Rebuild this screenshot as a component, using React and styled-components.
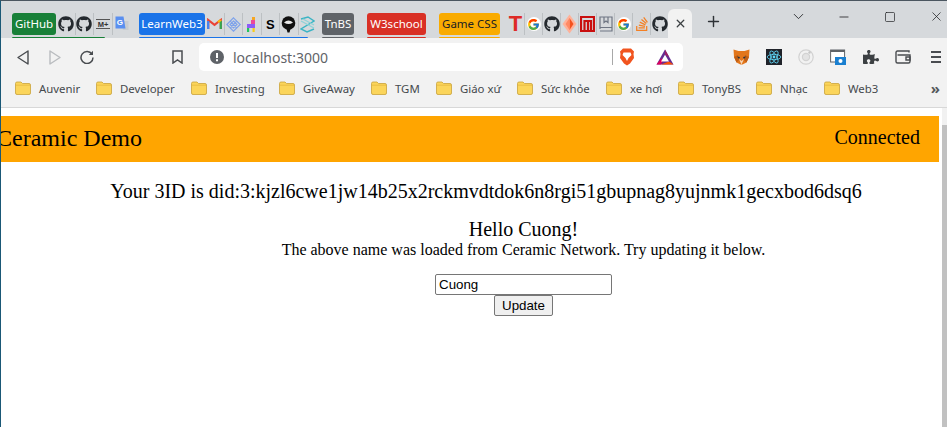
import React from 'react';
import styled, { createGlobalStyle } from 'styled-components';
import { FaGithub, FaStackOverflow, FaPuzzlePiece } from 'react-icons/fa';
import { FcGoogle } from 'react-icons/fc';
import { ChevronDown, Minus, Square, X, Plus } from 'lucide-react';

const GlobalStyle = createGlobalStyle`
  html, body { margin: 0; padding: 0; height: 100%; overflow: hidden; background: #fff; }
  #root { height: 427px; }
`;

const chromeFont = `'Noto Sans', 'Open Sans', Arial, sans-serif`;

const Window = styled.div`
  height: 427px;
  display: flex;
  flex-direction: column;
  border-left: 1px solid #1a5876;
  border-top: 1px solid #4b5660;
  box-sizing: border-box;
  font-family: ${chromeFont};
  overflow: hidden;
`;

const TabStrip = styled.div`
  height: 37px;
  flex: none;
  background: #d6d9dc;
  display: flex;
  align-items: flex-start;
  padding: 12px 0 0 11px;
  box-sizing: border-box;
`;

const Group = styled.div`
  display: flex;
  flex-direction: column;
  margin-left: ${(p) => p.$before || 0}px;
  margin-right: ${(p) => p.$gap || 0}px;
`;

const GroupRow = styled.div`
  display: flex;
  align-items: flex-start;
`;

const GroupLine = styled.div`
  height: 2px;
  margin-top: 2px;
  margin-right: ${(p) => p.$trim || 0}px;
  background: ${(p) => p.$color};
  border-radius: 1px 1px 0 0;
`;

const Pill = styled.div`
  height: 22px;
  line-height: 22px;
  margin-right: ${(p) => p.$after || 0}px;
  border-radius: 3px;
  background: ${(p) => p.$bg};
  color: ${(p) => p.$color || '#fff'};
  font-size: 11.5px;
  white-space: nowrap;
  flex: none;
  width: ${(p) => p.$w}px;
  box-sizing: border-box;
  text-align: center;
`;

const Pinned = styled.div`
  width: ${(p) => p.$w || 18.5}px;
  height: 22px;
  flex: none;
  display: flex;
  align-items: center;
  justify-content: center;
  box-sizing: border-box;
  border-right: ${(p) => (p.$last ? 'none' : '1px solid #bcc0c3')};
  color: #24292e;
`;

const ActiveTab = styled.div`
  width: 24px;
  height: 29px;
  margin-top: -4px;
  margin-left: -1px;
  flex: none;
  background: #f2f2f2;
  border-radius: 6px 6px 0 0;
  display: flex;
  align-items: center;
  justify-content: center;
  color: #3c4043;
`;

const NewTab = styled.div`
  flex: none;
  margin-left: 13px;
  display: flex;
  color: #2e3236;
`;

const WindowControls = styled.div`
  margin-left: auto;
  margin-right: -12px;
  margin-top: -5px;
  display: flex;
  align-items: center;
  color: #202124;
`;

const ControlButton = styled.div`
  width: 46px;
  display: flex;
  justify-content: center;
`;

const Toolbar = styled.div`
  height: 33px;
  flex: none;
  background: #f2f2f2;
  display: flex;
  align-items: flex-start;
  padding-top: 5px;
  box-sizing: border-box;
`;

const NavButton = styled.div`
  width: ${(p) => p.$w}px;
  margin-left: ${(p) => p.$before || 0}px;
  height: 28px;
  flex: none;
  display: flex;
  align-items: center;
  justify-content: center;
  color: #494c50;
`;

const Omnibox = styled.div`
  width: 484px;
  height: 28px;
  flex: none;
  margin-left: 10px;
  background: #fff;
  border-radius: 5px;
  display: flex;
  align-items: center;
  box-sizing: border-box;
  padding: 0 2px 0 11px;
`;

const Url = styled.span`
  font-size: 14px;
  color: #5f6368;
  margin-left: 9px;
  flex: 1;
`;

const OmniDivider = styled.div`
  width: 1px;
  height: 16px;
  background: #a8a8a8;
`;

const ExtIcons = styled.div`
  display: flex;
  align-items: center;
  margin-left: 42px;
`;

const ExtSlot = styled.div`
  width: ${(p) => p.$w || 32.4}px;
  margin-left: ${(p) => p.$before || 0}px;
  height: 28px;
  display: flex;
  align-items: center;
  justify-content: center;
  flex: none;
  color: #3c4043;
`;

const BookmarkBar = styled.div`
  height: 34px;
  padding: 0 0 2px 14px;
  flex: none;
  background: #f2f2f2;
  border-bottom: 1px solid #d8d8d8;
  display: flex;
  align-items: center;
`;

const Bookmark = styled.div`
  width: ${(p) => p.$w}px;
  flex: none;
  display: flex;
  align-items: center;
  gap: 8px;
  font-size: 11.4px;
  color: #45494d;
  white-space: nowrap;
`;

const MoreBookmarks = styled.div`
  margin-left: auto;
  padding-right: 7px;
  font-size: 15px;
  font-weight: 700;
  color: #55595c;
`;

const Page = styled.div`
  flex: 1;
  display: flex;
  min-height: 0;
  background: #fff;
  font-family: 'Liberation Serif', 'Times New Roman', serif;
  color: #000;
`;

const Main = styled.main`
  flex: 1;
  min-width: 0;
  padding-top: 8px;
`;

const Header = styled.header`
  height: 46px;
  margin-right: 3px;
  background: orange;
  display: flex;
  align-items: center;
  justify-content: space-between;
  overflow: hidden;
`;

const Title = styled.div`
  font-size: 24px;
  margin-left: -5px;
  margin-top: -1px;
`;

const Status = styled.div`
  font-size: 20px;
  margin-right: 19px;
  margin-top: -4px;
`;

const DidLine = styled.div`
  font-size: 20px;
  line-height: 23px;
  text-align: center;
  margin: 18px 0 0 29px;
  white-space: nowrap;
`;

const Form = styled.section`
  margin-top: 15px;
  padding-left: 104px;
  display: flex;
  flex-direction: column;
  align-items: center;
`;

const Hello = styled.div`
  font-size: 20px;
  line-height: 23px;
`;

const Note = styled.div`
  font-size: 16px;
  line-height: 18px;
  margin-bottom: 15px;
`;

const NameInput = styled.input`
  width: 177px;
  height: 21px;
  box-sizing: border-box;
  font-family: 'Liberation Sans', Arial, sans-serif;
  font-size: 13.33px;
  padding: 1px 3px;
  border: 1px solid #767676;
  border-radius: 2px;
  color: #000;
  margin: 0;
`;

const UpdateButton = styled.button`
  width: 59px;
  height: 21px;
  box-sizing: border-box;
  font-family: 'Liberation Sans', Arial, sans-serif;
  font-size: 13.33px;
  padding: 0;
  border: 1px solid #767676;
  border-radius: 2px;
  background: #efefef;
  color: #000;
  margin: 0;
`;

const Scrollbar = styled.div`
  width: 5px;
  flex: none;
  background: #f1f1f1;
  display: flex;
`;

const ScrollThumb = styled.div`
  flex: 1;
  margin-top: 17px;
  background: #c1c1c1;
`;

const Favicon = styled.span`
  font-family: 'Liberation Sans', Arial, sans-serif;
  font-size: ${(p) => p.$size}px;
  font-weight: 700;
  color: ${(p) => p.$color || '#000'};
  line-height: 1;
`;

const GoogleBadge = styled.span`
  display: flex;
  width: 14px;
  height: 14px;
  align-items: center;
  justify-content: center;
  background: #fff;
  border-radius: 50%;
`;

const Folder = () => (
  <svg width="16" height="14" viewBox="0 0 16 14">
    <path d="M0.5 2.5Q0.5 1 2 1H6L7.5 2.5H14Q15.5 2.5 15.5 4V12Q15.5 13.5 14 13.5H2Q0.5 13.5 0.5 12Z" fill="#fbd55b" stroke="#c9a23a" strokeWidth="0.8" />
    <path d="M1 4.2H15" stroke="#e6b93f" strokeWidth="0.8" />
  </svg>
);

const GmailIcon = () => (
  <svg width="15" height="12" viewBox="0 0 15 12" fill="none">
    <path d="M1.2 11V2L7.5 6.8 13.8 2V11" strokeWidth="2.2" stroke="#ea4335" />
    <path d="M1.2 11V3" strokeWidth="2.2" stroke="#4285f4" />
    <path d="M13.8 11V3" strokeWidth="2.2" stroke="#34a853" />
    <path d="M11 4.2 13.8 2" strokeWidth="2.2" stroke="#fbbc04" />
  </svg>
);

const MarkdownIcon = () => (
  <svg width="14" height="12" viewBox="0 0 14 12">
    <path d="M0 1.5H14M0 10.5H14" stroke="#555" strokeWidth="1" />
    <text x="7" y="8.6" fontSize="7.5" fontWeight="700" textAnchor="middle" fontFamily="Liberation Sans" fill="#333">M+</text>
  </svg>
);

const TranslateIcon = () => (
  <svg width="14" height="16" viewBox="0 0 14 16">
    <path d="M6 5H13.5V14H8Z" fill="#c9ccd0" />
    <path d="M0.5 0.5H8.5L10.5 12.5H0.5Z" fill="#5a8ff0" />
    <text x="4.8" y="9" fontSize="8" fontWeight="700" textAnchor="middle" fontFamily="Liberation Sans" fill="#fff">G</text>
  </svg>
);

const DiamondNetIcon = () => (
  <svg width="15" height="15" viewBox="0 0 15 15" fill="none" stroke="#7ea2ea" strokeWidth="1.2">
    <path d="M7.5 0.8 14.2 7.5 7.5 14.2 0.8 7.5Z" />
    <path d="M4.2 4.2 10.8 10.8M10.8 4.2 4.2 10.8M7.5 4 11 7.5 7.5 11 4 7.5Z" />
  </svg>
);

const LlamaIcon = () => (
  <svg width="11" height="15" viewBox="0 0 11 15">
    <path d="M6 0H9V3H6Z" fill="#f6a623" />
    <path d="M5 3H9V7H5Z" fill="#ec4899" />
    <path d="M1 7H9V11H1Z" fill="#8b5cf6" />
    <path d="M1 11H3.2V15H1Z" fill="#22c55e" />
    <path d="M6.5 11H8.7V15H6.5Z" fill="#facc15" />
  </svg>
);

const HelmetIcon = () => (
  <svg width="15" height="17" viewBox="0 0 15 17">
    <circle cx="7.5" cy="7" r="6.8" fill="#111" />
    <path d="M3 6.5Q7.5 2.5 12 6.5Q7.5 9.5 3 6.5Z" fill="#e8e8e8" />
    <path d="M5.5 13H9.5L8.5 16.5H6.5Z" fill="#111" />
  </svg>
);

const CrossChainIcon = () => (
  <svg width="15" height="17" viewBox="0 0 15 17" fill="none" strokeWidth="1.4">
    <path d="M1 3 8 1 14 5 1 13 7 16 14 13" stroke="#3cb4c4" />
    <path d="M1 5 14 12M3 3 14 9" stroke="#8fd3d8" />
  </svg>
);

const ForwardDiamond = () => (
  <svg width="15" height="20" viewBox="0 0 15 20">
    <path d="M7.5 0.5 14.5 10 7.5 19.5 0.5 10Z" fill="#ffb199" />
    <path d="M7.5 4 11.5 10 7.5 16Z" fill="#f4511e" />
    <path d="M7.5 4 3.5 10 7.5 16Z" fill="#ff8a65" />
  </svg>
);

const RedBoxIcon = () => (
  <svg width="15" height="16" viewBox="0 0 15 16" fill="none" stroke="#c90f0f" strokeWidth="2.2">
    <path d="M1 1H14V15H1Z" />
    <path d="M4.5 15V5H11V15M8 6V15" />
  </svg>
);

const BookIcon = () => (
  <svg width="14" height="16" viewBox="0 0 14 16" fill="none" stroke="#6f7683" strokeWidth="1.2">
    <path d="M1 13V1H13V13M1 11.5H13M1 15H13V12.5" />
    <path d="M5 1V6.5L7 5 9 6.5V1" />
  </svg>
);

const BackIcon = () => (
  <svg width="12" height="15" viewBox="0 0 12 15" fill="none" stroke="#494c50" strokeWidth="1.4" strokeLinejoin="round">
    <path d="M1 7.5 11 1V14Z" />
  </svg>
);

const ForwardIcon = () => (
  <svg width="12" height="15" viewBox="0 0 12 15" fill="none" stroke="#b9bcbf" strokeWidth="1.4" strokeLinejoin="round">
    <path d="M11 7.5 1 1V14Z" />
  </svg>
);

const ReloadIcon = () => (
  <svg width="14" height="14" viewBox="0 0 14 14" fill="none" stroke="#494c50" strokeWidth="1.5">
    <path d="M12 4.2A6 6 0 1 0 13 7.5" />
    <path d="M13 0.8V5H8.8Z" fill="#494c50" stroke="none" />
  </svg>
);

const BookmarkIcon = () => (
  <svg width="11" height="14" viewBox="0 0 11 14" fill="none" stroke="#494c50" strokeWidth="1.5">
    <path d="M1 1H10V13L5.5 10 1 13Z" />
  </svg>
);

const InfoIcon = () => (
  <svg width="14" height="14" viewBox="0 0 14 14">
    <circle cx="7" cy="7" r="7" fill="#5f6368" />
    <path d="M6 3H8V8H6ZM6 9.3H8V11.2H6Z" fill="#fff" />
  </svg>
);

const BraveIcon = () => (
  <svg width="16" height="18" viewBox="0 0 16 18">
    <path d="M4 0.5H12L15 3.5 14.5 6 15 10 11 15.5 8 17.5 5 15.5 1 10 1.5 6 1 3.5Z" fill="#f1541f" />
    <path d="M4.5 4.5H11.5L12.5 7 9.5 10 8 13 6.5 10 3.5 7Z" fill="#fff" />
  </svg>
);

const BatIcon = () => (
  <svg width="18" height="16" viewBox="0 0 18 16">
    <path d="M9 0.5 17.5 15.5H0.5Z" fill="#662d91" />
    <path d="M9 0.5 13.2 8 9 5.8Z" fill="#9e1f63" />
    <path d="M0.5 15.5 5.5 9.2 7 11.5 5 15.5Z" fill="#e0005a" />
    <path d="M17.5 15.5H5L13 12.5Z" fill="#ff5000" />
    <path d="M9 5.8 13 12.5H5Z" fill="#fff" />
  </svg>
);

const FoxIcon = () => (
  <svg width="17" height="16" viewBox="0 0 17 16">
    <path d="M0.5 0.5 5.5 2H11.5L16.5 0.5 16 8 13.5 13.5 9.5 15.5H7.5L3.5 13.5 1 8Z" fill="#e2761b" />
    <path d="M1 8 5 6 6 11 3.5 13.5ZM16 8 12 6 11 11 13.5 13.5Z" fill="#c05f14" />
    <path d="M6 10 8.5 15.5 11 10 8.5 12Z" fill="#f6d7b8" />
    <path d="M4 7.5 7 8 6 10ZM13 7.5 10 8 11 10Z" fill="#233447" />
  </svg>
);

const ReactDevIcon = () => (
  <svg width="16" height="16" viewBox="0 0 16 16">
    <rect width="16" height="16" fill="#20232a" />
    <g fill="none" stroke="#61dafb" strokeWidth="0.8">
      <ellipse cx="8" cy="8" rx="6.8" ry="2.7" />
      <ellipse cx="8" cy="8" rx="6.8" ry="2.7" transform="rotate(60 8 8)" />
      <ellipse cx="8" cy="8" rx="6.8" ry="2.7" transform="rotate(120 8 8)" />
    </g>
    <circle cx="8" cy="8" r="1.4" fill="#61dafb" />
  </svg>
);

const FadedTargetIcon = () => (
  <svg width="16" height="16" viewBox="0 0 16 16" fill="none" stroke="#d2d2d2" strokeWidth="1.2">
    <circle cx="8" cy="8" r="7.2" />
    <circle cx="8" cy="8" r="3.6" fill="#e3e3e3" />
    <circle cx="11.5" cy="3.5" r="1.2" fill="#c6c6c6" stroke="none" />
  </svg>
);

const CaptureIcon = () => (
  <svg width="16" height="16" viewBox="0 0 16 16">
    <rect x="0.6" y="1" width="14" height="12" fill="#fff" stroke="#5f6368" strokeWidth="1" />
    <rect x="0.6" y="1" width="14" height="2" fill="#5f6368" />
    <rect x="5" y="8" width="11" height="8" fill="#1a7fd0" />
    <circle cx="10.5" cy="12" r="2" fill="#fff" />
  </svg>
);

const WalletIcon = () => (
  <svg width="16" height="14" viewBox="0 0 16 14" fill="none" stroke="#494c50" strokeWidth="1.4">
    <path d="M14 2.5V1H2.5Q1 1 1 2.5V11.5Q1 13 2.5 13H13.5Q15 13 15 11.5V5H2.5" />
    <path d="M11 7H15V10H11Z" />
  </svg>
);

const MenuIcon = () => (
  <svg width="10" height="12" viewBox="0 0 10 12" fill="#494c50">
    <rect width="10" height="2" y="0" />
    <rect width="10" height="2" y="5" />
    <rect width="10" height="2" y="10" />
  </svg>
);

const Google = () => (
  <GoogleBadge>
    <FcGoogle size={13} />
  </GoogleBadge>
);

const bookmarks = [
  ['Auvenir', 81],
  ['Developer', 95],
  ['Investing', 88],
  ['GiveAway', 92],
  ['TGM', 65],
  ['Giáo xứ', 81],
  ['Sức khỏe', 89],
  ['xe hơi', 72],
  ['TonyBS', 78],
  ['Nhạc', 68],
  ['Web3', 70],
];

export default function App() {
  return (
    <>
      <GlobalStyle />
      <Window>
        <TabStrip>
          <Group>
            <GroupRow>
              <Pill $bg="#188038" $w={44} $after={1}>GitHub</Pill>
              <Pinned><FaGithub size={16} /></Pinned>
              <Pinned><FaGithub size={16} /></Pinned>
              <Pinned><MarkdownIcon /></Pinned>
            </GroupRow>
            <GroupLine $color="#188038" $trim={8} />
          </Group>
          <Pinned $last><TranslateIcon /></Pinned>
          <Group $before={8} $gap={5}>
            <GroupRow>
              <Pill $bg="#1a73e8" $w={66} $after={1}>LearnWeb3</Pill>
              <Pinned><GmailIcon /></Pinned>
              <Pinned><DiamondNetIcon /></Pinned>
              <Pinned><LlamaIcon /></Pinned>
              <Pinned><Favicon $size={13}>S</Favicon></Pinned>
              <Pinned><HelmetIcon /></Pinned>
              <Pinned $last><CrossChainIcon /></Pinned>
            </GroupRow>
            <GroupLine $color="#1a73e8" $trim={9} />
          </Group>
          <Group $gap={13}>
            <Pill $bg="#5f6368" $w={32}>TnBS</Pill>
            <GroupLine $color="#5f6368" />
          </Group>
          <Group $gap={13}>
            <Pill $bg="#d93025" $w={59}>W3school</Pill>
            <GroupLine $color="#d93025" />
          </Group>
          <Group $gap={7}>
            <Pill $bg="#f9ab00" $color="#202124" $w={61}>Game CSS</Pill>
            <GroupLine $color="#f9ab00" />
          </Group>
          <Pinned $w={18}><Favicon $size={22} $color="#de2b26">T</Favicon></Pinned>
          <Pinned $w={18}><Google /></Pinned>
          <Pinned $w={18}><FaGithub size={16} /></Pinned>
          <Pinned $w={18}><ForwardDiamond /></Pinned>
          <Pinned $w={18}><RedBoxIcon /></Pinned>
          <Pinned $w={18}><BookIcon /></Pinned>
          <Pinned $w={18}><Google /></Pinned>
          <Pinned $w={18}><FaStackOverflow size={16} color="#f48024" /></Pinned>
          <Pinned $w={18} $last><FaGithub size={16} /></Pinned>
          <ActiveTab><X size={13} strokeWidth={2.4} /></ActiveTab>
          <NewTab><Plus size={17} strokeWidth={2} /></NewTab>
          <WindowControls>
            <ControlButton><ChevronDown size={17} strokeWidth={1.2} /></ControlButton>
            <ControlButton><Minus size={14} strokeWidth={1.4} /></ControlButton>
            <ControlButton><Square size={12} strokeWidth={1.4} /></ControlButton>
            <ControlButton><X size={15} strokeWidth={1.2} /></ControlButton>
          </WindowControls>
        </TabStrip>
        <Toolbar>
          <NavButton $w={43}><BackIcon /></NavButton>
          <NavButton $w={22}><ForwardIcon /></NavButton>
          <NavButton $w={42}><ReloadIcon /></NavButton>
          <NavButton $w={24} $before={57}><BookmarkIcon /></NavButton>
          <Omnibox>
            <InfoIcon />
            <Url>localhost:3000</Url>
            <OmniDivider />
            <ExtSlot $w={28}><BraveIcon /></ExtSlot>
            <ExtSlot $before={8}><BatIcon /></ExtSlot>
          </Omnibox>
          <ExtIcons>
            <ExtSlot><FoxIcon /></ExtSlot>
            <ExtSlot><ReactDevIcon /></ExtSlot>
            <ExtSlot><FadedTargetIcon /></ExtSlot>
            <ExtSlot><CaptureIcon /></ExtSlot>
            <ExtSlot><FaPuzzlePiece size={16} /></ExtSlot>
            <ExtSlot><WalletIcon /></ExtSlot>
            <ExtSlot><MenuIcon /></ExtSlot>
          </ExtIcons>
        </Toolbar>
        <BookmarkBar>
          {bookmarks.map(([name, width]) => (
            <Bookmark key={name} $w={width}>
              <Folder />
              {name}
            </Bookmark>
          ))}
          <MoreBookmarks>»</MoreBookmarks>
        </BookmarkBar>
        <Page>
          <Main>
            <Header>
              <Title>Ceramic Demo</Title>
              <Status>Connected</Status>
            </Header>
            <DidLine>Your 3ID is did:3:kjzl6cwe1jw14b25x2rckmvdtdok6n8rgi51gbupnag8yujnmk1gecxbod6dsq6</DidLine>
            <Form>
              <Hello>Hello Cuong!</Hello>
              <Note>The above name was loaded from Ceramic Network. Try updating it below.</Note>
              <NameInput defaultValue="Cuong" />
              <UpdateButton>Update</UpdateButton>
            </Form>
          </Main>
          <Scrollbar>
            <ScrollThumb />
          </Scrollbar>
        </Page>
      </Window>
    </>
  );
}
